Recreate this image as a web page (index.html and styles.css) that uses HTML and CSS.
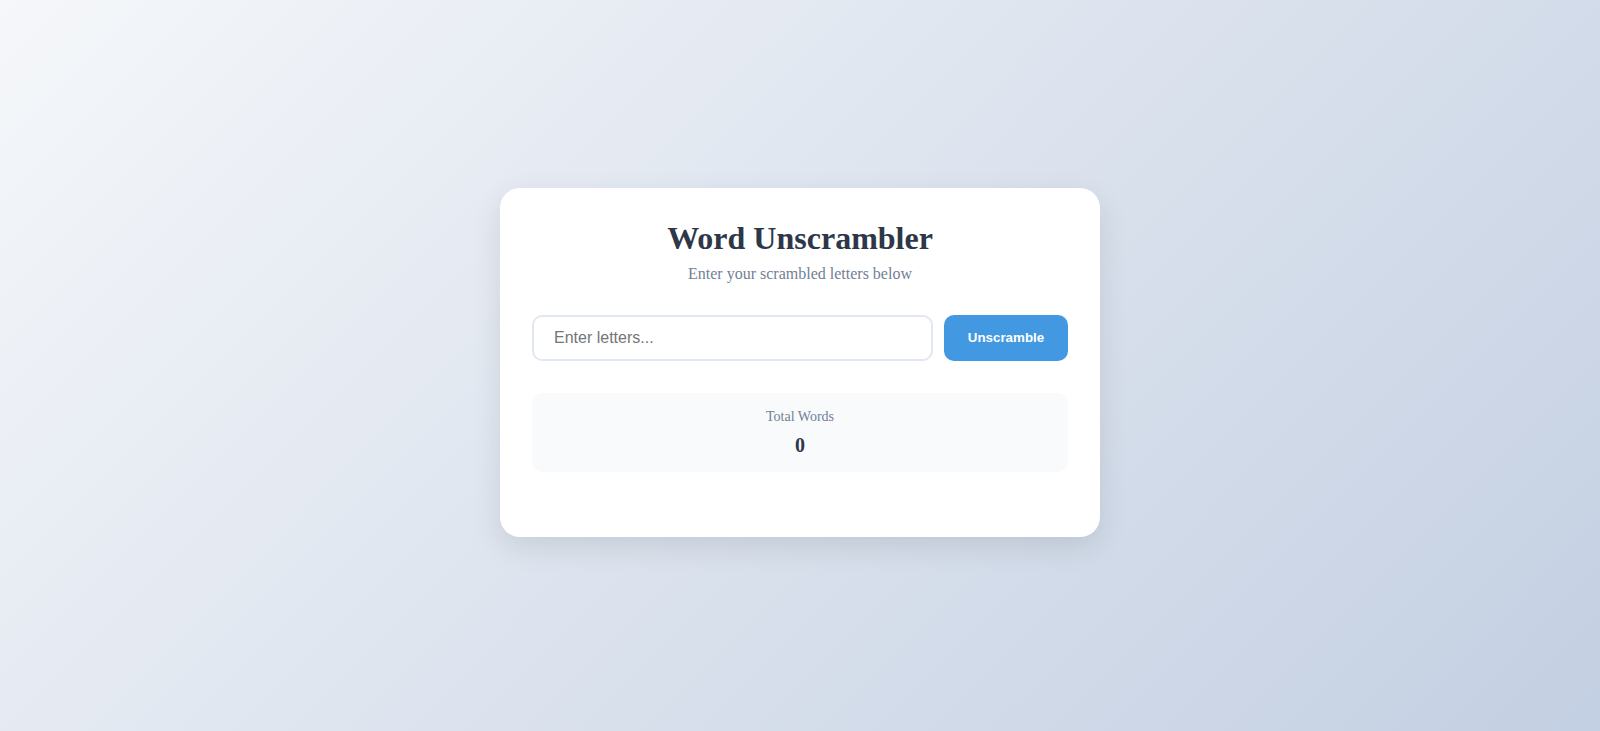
FILE: index.html
```html
<!DOCTYPE html>
<html lang="en">
<head>
<meta charset="UTF-8">
<title>Word Unscrambler</title>
<link rel="stylesheet" href="styles.css">
</head>
<body>
  <div class="card">
    <h1 class="title">Word Unscrambler</h1>
    <p class="subtitle">Enter your scrambled letters below</p>
    <div class="input-row">
      <input class="letters" type="text" placeholder="Enter letters...">
      <button class="btn" type="button">Unscramble</button>
    </div>
    <div class="stats">
      <div class="stat-label">Total Words</div>
      <div class="stat-value">0</div>
    </div>
    <div class="results"></div>
  </div>
</body>
</html>
```
FILE: styles.css
```css
* { box-sizing: border-box; }
html, body { height: 100%; }
body {
  margin: 0;
  min-height: 100vh;
  padding-bottom: 7px;
  display: flex;
  align-items: center;
  justify-content: center;
  background: linear-gradient(135deg, #f5f7fa 0%, #c3cfe2 100%);
  font-family: "Liberation Serif", "Times New Roman", serif;
}
.card {
  width: 600px;
  background: #ffffff;
  border-radius: 20px;
  padding: 32px;
  box-shadow: 0 10px 30px rgba(0, 0, 0, 0.1);
  text-align: center;
}
.title {
  margin: 0;
  font-size: 32px;
  font-weight: bold;
  line-height: 37px;
  color: #2d3748;
}
.subtitle {
  margin: 8px 0 0;
  font-size: 16px;
  line-height: 18px;
  color: #718096;
}
.input-row {
  display: flex;
  gap: 11px;
  margin-top: 32px;
}
.letters {
  flex: 1;
  min-width: 0;
  height: 46px;
  padding: 0 20px;
  border: 2px solid #e2e8f0;
  border-radius: 10px;
  font-family: "Liberation Sans", Arial, sans-serif;
  font-size: 16px;
  color: #2d3748;
  outline: none;
}
.letters::placeholder { color: #757575; }
.btn {
  height: 46px;
  width: 124px;
  padding: 0;
  border: none;
  border-radius: 10px;
  background: #4299e1;
  color: #ffffff;
  font-family: "Liberation Sans", Arial, sans-serif;
  font-size: 13.333px;
  font-weight: bold;
  cursor: pointer;
}
.stats {
  margin-top: 32px;
  padding: 16px 16px 15px;
  background: #f8fafc;
  border-radius: 10px;
}
.stat-label {
  font-size: 14px;
  line-height: 16px;
  color: #718096;
}
.stat-value {
  margin-top: 9px;
  font-size: 20px;
  line-height: 23px;
  font-weight: bold;
  color: #2d3748;
}
.results {
  margin-top: 33px;
}
```
